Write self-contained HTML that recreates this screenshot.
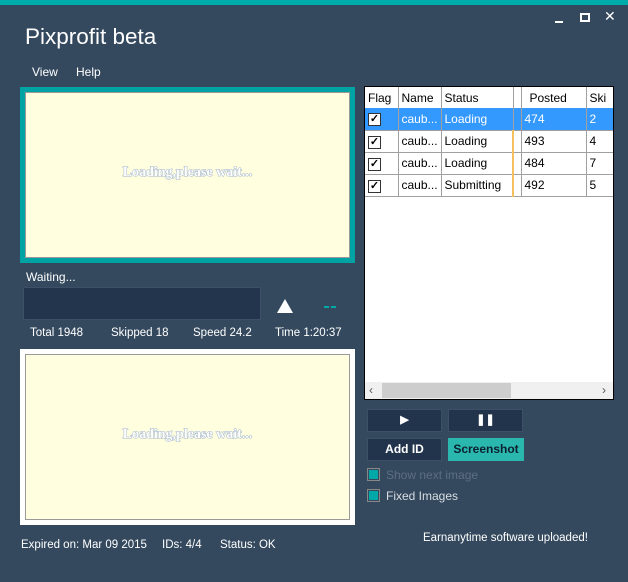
<!DOCTYPE html>
<html><head><style>
*{margin:0;padding:0;box-sizing:border-box}
body{width:628px;height:582px;background:#34495e;font-family:"Liberation Sans",sans-serif;font-size:12px;color:#fff;position:relative;overflow:hidden}
.a{position:absolute;white-space:nowrap}
.panel{position:absolute;background:#ffffdf;border:1px solid #999}
.load{position:absolute;width:100%;text-align:center;font-family:"Liberation Serif",serif;font-weight:bold;font-size:14px;color:#fff;-webkit-text-stroke:1px #9fb2c8;paint-order:stroke fill}
table{border-collapse:collapse;font-size:12px;color:#000}
td,th{border-right:1px solid #a0a0a0;border-bottom:1px solid #a0a0a0;height:22px;padding:0 3px;font-weight:normal;text-align:left;overflow:hidden}
th{border-bottom:none;height:21px}
.sel td{background:#3399ff;color:#fff}
.cb{display:inline-block;width:13px;height:13px;border:1px solid #333;background:#fff;color:#000;font-size:11px;line-height:11px;text-align:center;font-weight:bold}
.btn{position:absolute;background:#22344c;border:1px solid #3e5068;color:#fff;font-weight:bold;text-align:center;line-height:20px}
.chk{position:absolute;width:13px;height:13px;border:1px solid #888;background:#34495e;padding:1px}
.chk div{width:100%;height:100%;background:#00a8a8}
</style></head><body>
<div class="a" style="left:0;top:0;width:628px;height:5px;background:#00abab"></div>
<div class="a" style="left:555px;top:21px;width:8px;height:2px;background:#fff"></div>
<div class="a" style="left:580px;top:13px;width:10px;height:9px;border:2px solid #fff"></div>
<div class="a" style="left:604px;top:8px;font-size:14px">✕</div>
<div class="a" style="left:25px;top:24px;font-size:22.5px">Pixprofit beta</div>
<div class="a" style="left:32px;top:65px">View</div>
<div class="a" style="left:76px;top:65px">Help</div>

<div class="a" style="left:20px;top:87px;width:335px;height:176px;background:#00a3a3"></div>
<div class="panel" style="left:25px;top:92px;width:325px;height:166px"><div class="load" style="top:72px">Loading,please wait...</div></div>

<div class="a" style="left:26px;top:270px">Waiting...</div>
<div class="a" style="left:23px;top:287px;width:238px;height:33px;background:#22354d;border:1px solid #3e5068"></div>
<div class="a" style="left:277px;top:299px;width:0;height:0;border-left:8px solid transparent;border-right:8px solid transparent;border-bottom:14px solid #fff"></div>
<div class="a" style="left:324px;top:306px;width:5px;height:2px;background:#00a8a8"></div>
<div class="a" style="left:331px;top:306px;width:5px;height:2px;background:#00a8a8"></div>
<div class="a" style="left:30px;top:327px;font-size:11.5px">Total 1948</div>
<div class="a" style="left:111px;top:327px;font-size:11.5px">Skipped 18</div>
<div class="a" style="left:193px;top:327px;font-size:11.5px">Speed 24.2</div>
<div class="a" style="left:275px;top:327px;font-size:11.5px">Time 1:20:37</div>

<div class="a" style="left:20px;top:349px;width:335px;height:176px;background:#fff"></div>
<div class="panel" style="left:25px;top:354px;width:325px;height:166px"><div class="load" style="top:72px">Loading,please wait...</div></div>

<div class="a" style="left:364px;top:86px;width:250px;height:314px;background:#fff;border:1px solid #000;overflow:hidden">
<table style="table-layout:fixed;width:260px">
<colgroup><col style="width:33px"><col style="width:43px"><col style="width:72px"><col style="width:8px"><col style="width:65px"><col style="width:39px"></colgroup>
<tr><th>Flag</th><th>Name</th><th>Status</th><th></th><th style="padding-left:8px">Posted</th><th>Ski</th></tr>
<tr class="sel"><td><span class="cb">✓</span></td><td>caub...</td><td>Loading</td><td></td><td>474</td><td>2</td></tr>
<tr><td><span class="cb">✓</span></td><td>caub...</td><td>Loading</td><td style="border-left:2px solid #f5c060"></td><td>493</td><td>4</td></tr>
<tr><td><span class="cb">✓</span></td><td>caub...</td><td>Loading</td><td style="border-left:2px solid #f5c060"></td><td>484</td><td>7</td></tr>
<tr><td><span class="cb">✓</span></td><td>caub...</td><td>Submitting</td><td style="border-left:2px solid #f5c060"></td><td>492</td><td>5</td></tr>
</table>
<div class="a" style="left:0;top:295px;width:248px;height:17px;background:#f0f0f0"></div>
<div class="a" style="left:17px;top:296px;width:129px;height:15px;background:#cdcdcd"></div>
<div class="a" style="left:4px;top:296px;color:#555;font-size:12px">‹</div>
<div class="a" style="left:237px;top:296px;color:#555;font-size:12px">›</div>
</div>

<div class="btn" style="left:367px;top:409px;width:75px;height:23px;font-size:11px">▶</div>
<div class="btn" style="left:448px;top:409px;width:75px;height:23px;font-size:11px">❚❚</div>
<div class="btn" style="left:367px;top:438px;width:75px;height:23px">Add ID</div>
<div class="btn" style="left:448px;top:438px;width:76px;height:23px;background:#2ab8ae;border-color:#2ab8ae;color:#0c2030;font-weight:bold">Screenshot</div>
<div class="chk" style="left:367px;top:468px"><div></div></div>
<div class="a" style="left:386px;top:468px;color:#5d6e80">Show next image</div>
<div class="chk" style="left:367px;top:489px"><div></div></div>
<div class="a" style="left:386px;top:489px;color:#d8dde3">Fixed Images</div>

<div class="a" style="left:21px;top:539px;font-size:11.5px">Expired on: Mar 09 2015</div>
<div class="a" style="left:162px;top:539px;font-size:11.5px">IDs: 4/4</div>
<div class="a" style="left:220px;top:539px;font-size:11.5px">Status: OK</div>
<div class="a" style="left:423px;top:532px;font-size:11.5px">Earnanytime software uploaded!</div>
</body></html>
